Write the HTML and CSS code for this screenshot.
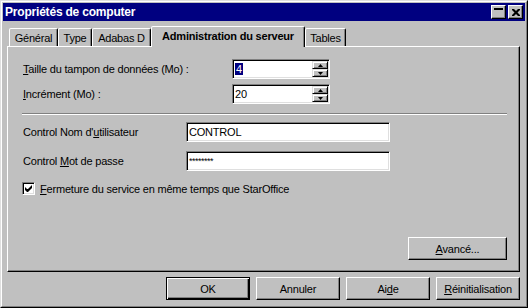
FILE: index.html
```html
<!DOCTYPE html>
<html>

<head>
    <title>Propriétés de computer</title>
    <link rel="stylesheet" href="styles.css">
</head>

<body>
    <div class="window">
        <div class="frame">
            <div class="titlebar">
                <span class="title">Propriétés de computer</span>
                <div class="caption-buttons">
                    <span class="cap-btn"><span class="min-glyph"></span></span>
                    <span class="cap-btn">
                        <svg width="8" height="7" viewBox="0 0 8 7">
                            <path d="M0 0h2l2 2 2-2h2v1l-2.5 2.5 2.5 2.5v1h-2l-2-2-2 2h-2v-1l2.5-2.5-2.5-2.5z" fill="#000"/>
                        </svg>
                    </span>
                </div>
            </div>

            <div class="dialog">
                <div class="tabs">
                    <div class="tab tab-general">Général</div>
                    <div class="tab tab-type">Type</div>
                    <div class="tab tab-adabas">Adabas D</div>
                    <div class="tab tab-active">Administration du serveur</div>
                    <div class="tab tab-tables">Tables</div>
                </div>

                <div class="panel">
                    <div class="fields fields-size">
                        <label><u>T</u>aille du tampon de données (Mo) :</label>
                        <div class="edit spin-edit">
                            <span class="edit-text"><span class="selected">4</span></span>
                            <div class="spin">
                                <span class="spin-btn"><svg width="5" height="3" viewBox="0 0 5 3"><path d="M2.5 0L5 3H0z" fill="#000"/></svg></span>
                                <span class="spin-btn"><svg width="5" height="3" viewBox="0 0 5 3"><path d="M0 0h5L2.5 3z" fill="#000"/></svg></span>
                            </div>
                        </div>

                        <label><u>I</u>ncrément (Mo) :</label>
                        <div class="edit spin-edit">
                            <span class="edit-text">20</span>
                            <div class="spin">
                                <span class="spin-btn"><svg width="5" height="3" viewBox="0 0 5 3"><path d="M2.5 0L5 3H0z" fill="#000"/></svg></span>
                                <span class="spin-btn"><svg width="5" height="3" viewBox="0 0 5 3"><path d="M0 0h5L2.5 3z" fill="#000"/></svg></span>
                            </div>
                        </div>
                    </div>

                    <div class="separator"></div>

                    <div class="fields fields-user">
                        <label>Control Nom d'<u>u</u>tilisateur</label>
                        <div class="edit"><span class="edit-text">CONTROL</span></div>

                        <label>Control <u>M</u>ot de passe</label>
                        <div class="edit"><span class="edit-text password">********</span></div>
                    </div>

                    <label class="check-row">
                        <span class="checkbox">
                            <svg width="7" height="7" viewBox="0 0 7 7">
                                <path d="M0 2v3l2 2h1l4-4v-3l-4 4h-1z" fill="#000"/>
                            </svg>
                        </span>
                        <span><u>F</u>ermeture du service en même temps que StarOffice</span>
                    </label>

                    <div class="panel-footer">
                        <button type="button" class="btn btn-advanced"><u>A</u>vancé...</button>
                    </div>
                </div>

                <div class="actions">
                    <button type="button" class="btn btn-default">OK</button>
                    <button type="button" class="btn">Annuler</button>
                    <button type="button" class="btn">Ai<u>d</u>e</button>
                    <button type="button" class="btn"><u>R</u>éinitialisation</button>
                </div>
            </div>
        </div>
    </div>
</body>

</html>
```

FILE: styles.css
```css
body {
    margin: 0;
    padding: 0;
    font-family: "Liberation Sans", Arial, sans-serif;
    font-size: 11px;
    letter-spacing: -0.2px;
    color: #000;
    background-color: #c0c0c0;
}

.window {
    width: 528px;
    height: 308px;
    box-sizing: border-box;
    border: 1px solid;
    border-color: #dfdfdf #000 #000 #dfdfdf;
    background-color: #c0c0c0;
}

.frame {
    height: 100%;
    box-sizing: border-box;
    border: 1px solid;
    border-color: #fff #808080 #808080 #fff;
    padding: 1px;
    display: flex;
    flex-direction: column;
}

.titlebar {
    height: 18px;
    background-color: #000080;
    color: #fff;
    display: flex;
    align-items: center;
    justify-content: space-between;
    padding: 0 2px 0 2px;
}

.title {
    font-weight: bold;
    font-size: 12px;
}

.caption-buttons {
    display: flex;
    gap: 2px;
}

.cap-btn {
    width: 15px;
    height: 14px;
    box-sizing: border-box;
    background-color: #c0c0c0;
    border: 1px solid;
    border-color: #fff #000 #000 #fff;
    box-shadow: inset -1px -1px #808080;
    display: flex;
    align-items: center;
    justify-content: center;
}

.min-glyph {
    width: 9px;
    height: 2px;
    background-color: #000;
    margin-bottom: 6px;
}

.dialog {
    flex: 1;
    display: flex;
    flex-direction: column;
    padding: 5px 5px 0 4px;
}

.tabs {
    display: flex;
    align-items: flex-end;
    height: 20px;
    padding-left: 2px;
}

.tab {
    height: 18px;
    box-sizing: border-box;
    border: 1px solid;
    border-bottom: none;
    border-color: #fff #000 transparent #fff;
    border-radius: 2px 2px 0 0;
    box-shadow: inset -1px 0 #808080;
    display: flex;
    align-items: center;
    justify-content: center;
    background-color: #c0c0c0;
}

.tab-general {
    width: 49px;
}

.tab-type {
    width: 34px;
}

.tab-adabas {
    width: 59px;
}

.tab-active {
    width: 154px;
    height: 21px;
    margin-bottom: -1px;
    position: relative;
    z-index: 1;
    font-weight: bold;
    padding-bottom: 2px;
}

.tab-tables {
    width: 41px;
}

.panel {
    height: 226px;
    box-sizing: border-box;
    border: 1px solid;
    border-color: #fff #000 #000 #fff;
    box-shadow: inset -1px -1px #808080;
    padding: 12px 12px 11px 15px;
    display: flex;
    flex-direction: column;
}

.fields {
    display: grid;
    align-items: center;
    row-gap: 5px;
}

.fields-size {
    grid-template-columns: 209px 98px;
}

.fields-user {
    grid-template-columns: 163px 204px;
    row-gap: 9px;
    margin-top: 7px;
}

.edit {
    height: 20px;
    box-sizing: border-box;
    background-color: #fff;
    border: 1px solid;
    border-color: #808080 #fff #fff #808080;
    box-shadow: inset 1px 1px #000, inset -1px -1px #dfdfdf;
    display: flex;
    align-items: center;
    padding: 0 1px 0 2px;
}

.edit-text {
    flex: 1;
    line-height: 14px;
}

.selected {
    background-color: #000080;
    color: #fff;
    padding: 0 1px;
}

.password {
    font-size: 9px;
    letter-spacing: -0.5px;
}

.spin {
    width: 16px;
    height: 16px;
    display: flex;
    flex-direction: column;
}

.spin-btn {
    flex: 1;
    box-sizing: border-box;
    background-color: #c0c0c0;
    border: 1px solid;
    border-color: #dfdfdf #000 #000 #dfdfdf;
    box-shadow: inset 1px 1px #fff, inset -1px -1px #808080;
    display: flex;
    align-items: center;
    justify-content: center;
}

.separator {
    margin: 9px 0 0 -1px;
    height: 0;
    border-top: 1px solid #808080;
    border-bottom: 1px solid #fff;
}

.check-row {
    display: flex;
    align-items: center;
    gap: 5px;
    margin: 11px 0 0 -1px;
}

.checkbox {
    width: 13px;
    height: 13px;
    box-sizing: border-box;
    background-color: #fff;
    border: 1px solid;
    border-color: #808080 #fff #fff #808080;
    box-shadow: inset 1px 1px #000, inset -1px -1px #dfdfdf;
    display: flex;
    align-items: center;
    justify-content: center;
}

.panel-footer {
    margin-top: auto;
    display: flex;
    justify-content: flex-end;
}

.btn {
    width: 84px;
    height: 23px;
    box-sizing: border-box;
    font-family: inherit;
    font-size: 11px;
    letter-spacing: inherit;
    color: #000;
    background-color: #c0c0c0;
    border: 1px solid;
    border-color: #fff #000 #000 #fff;
    box-shadow: inset -1px -1px #808080;
    padding: 0;
}

.btn-advanced {
    width: 99px;
    height: 23px;
}

.btn-default {
    border-color: #000;
    box-shadow: inset 1px 1px #fff, inset -1px -1px #000, inset -2px -2px #808080;
}

.actions {
    display: flex;
    justify-content: flex-end;
    gap: 6px;
    margin-top: 5px;
}
```
